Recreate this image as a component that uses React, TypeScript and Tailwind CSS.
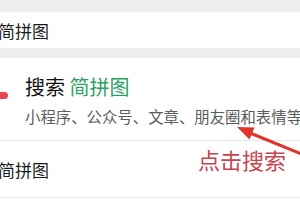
export default function App() {
  return (
    <div className="relative h-[200px] w-[300px] overflow-hidden bg-white font-['Noto_Sans_CJK_SC','Noto_Sans',sans-serif]">
      <div className="h-[12px] bg-[#ededed]" />

      {/* suggestion row */}
      <div className="flex h-[36px] items-center">
        <span className="-ml-[2px] text-[17px] leading-none text-[#1a1a1a]">
          简拼图
        </span>
      </div>

      <div className="h-[10px] bg-[#ededed]" />

      {/* search result item */}
      <div className="flex h-[82px]">
        <div className="w-[25px] shrink-0 pt-[34px]">
          <div className="h-[7px] w-[8px] rounded-r-full bg-[#e4474f]" />
        </div>
        <div className="flex min-w-0 flex-col pt-[19px]">
          <div className="whitespace-nowrap text-[20px] leading-none text-[#111]">
            搜索 <span className="text-[#2a9f63]">简拼图</span>
          </div>
          <div className="mt-[12px] whitespace-nowrap text-[15.4px] leading-none text-[#5c5c5c]">
            小程序、公众号、文章、朋友圈和表情等
          </div>
        </div>
      </div>

      <div className="h-px bg-[#e6e6e6]" />

      <div className="flex h-[56px] items-center">
        <span className="-ml-[2px] text-[17px] leading-none text-[#1a1a1a]">
          简拼图
        </span>
      </div>

      <div className="h-px bg-[#e6e6e6]" />

      {/* annotation overlay */}
      <span className="absolute left-[198px] top-[148px] whitespace-nowrap text-[22px] leading-none text-[#c9434f]">
        点击搜索
      </span>
      <svg
        className="absolute left-0 top-0"
        width="300"
        height="200"
        viewBox="0 0 300 200"
      >
        <line
          x1="304"
          y1="155"
          x2="250"
          y2="133"
          stroke="#e0352b"
          strokeWidth="3"
          strokeLinecap="round"
        />
        <polygon points="237,127 254.5,127.5 249.5,139.5" fill="#e0352b" />
      </svg>
    </div>
  );
}
